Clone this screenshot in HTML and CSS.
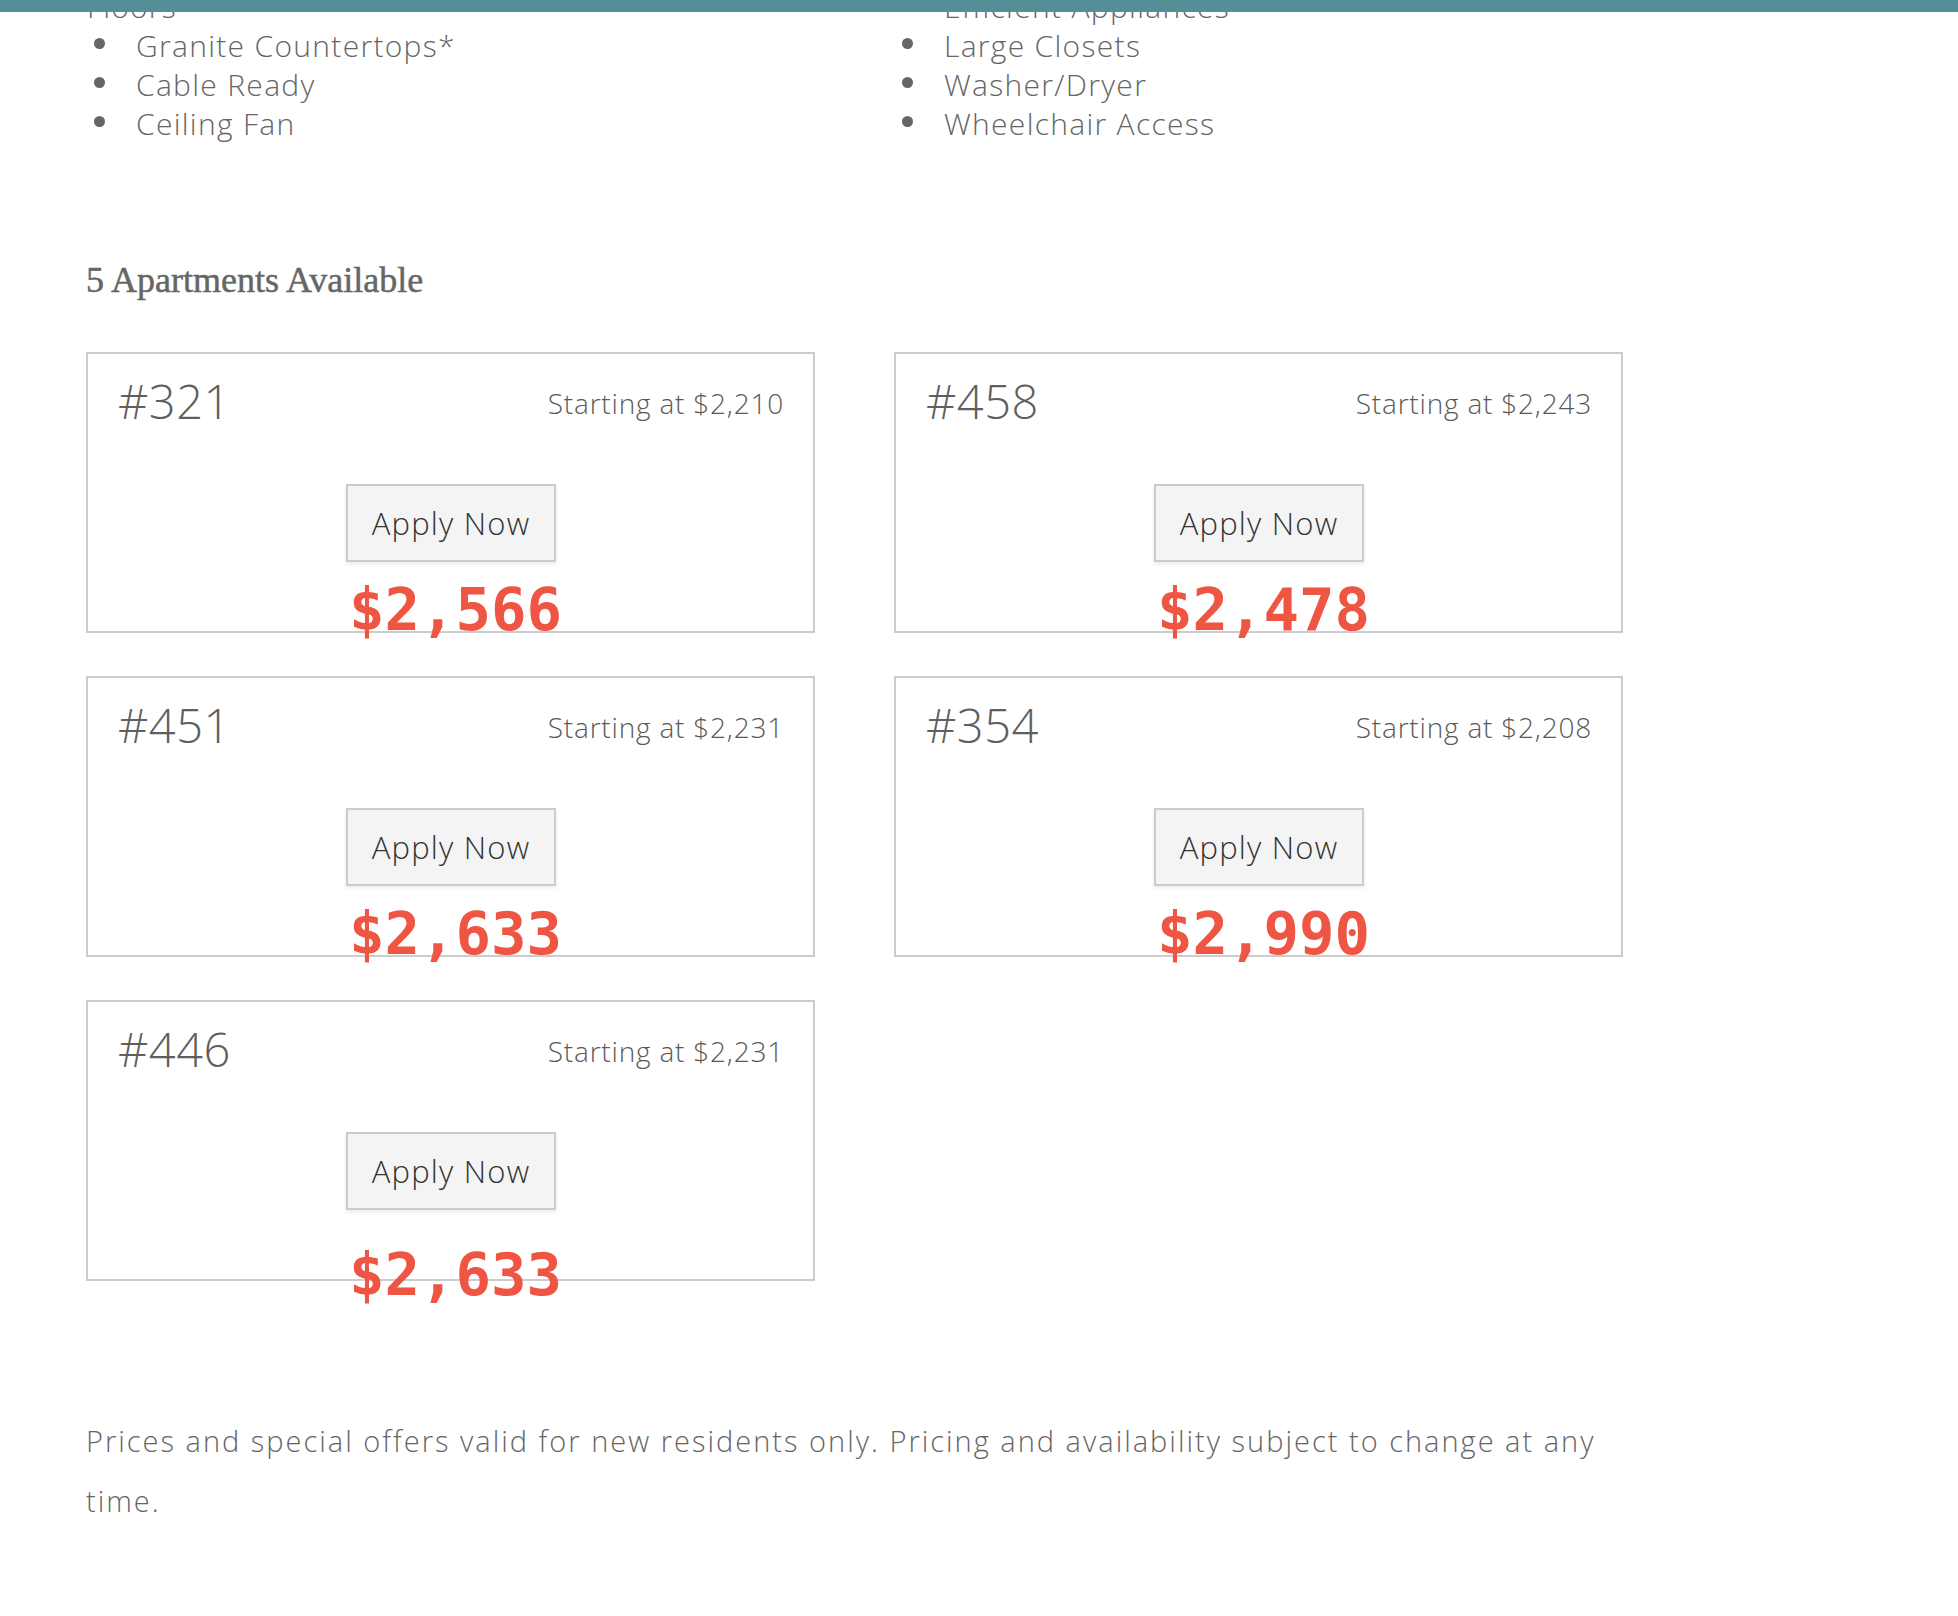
FILE: index.html
```html
<!DOCTYPE html>
<html lang="en">
<head>
<meta charset="utf-8">
<title>Apartments Available</title>
<link rel="stylesheet" href="styles.css">
</head>
<body>
<div class="topbar"></div>
<main class="page">
  <section class="amenities">
    <div class="amen-col">
      <p class="amen-tail">Floors</p>
      <ul class="amen-list">
        <li>Granite Countertops*</li>
        <li>Cable Ready</li>
        <li>Ceiling Fan</li>
      </ul>
    </div>
    <div class="amen-col">
      <ul class="amen-list">
        <li class="no-bullet">Efficient Appliances</li>
        <li>Large Closets</li>
        <li>Washer/Dryer</li>
        <li>Wheelchair Access</li>
      </ul>
    </div>
  </section>

  <h2 class="avail-title">5 Apartments Available</h2>

  <section class="units">
    <article class="unit">
      <div class="unit-head">
        <span class="unit-num">#321</span>
        <span class="unit-start">Starting at $2,210</span>
      </div>
      <button class="apply">Apply Now</button>
      <div class="unit-price">$2,566</div>
    </article>
    <article class="unit">
      <div class="unit-head">
        <span class="unit-num">#458</span>
        <span class="unit-start">Starting at $2,243</span>
      </div>
      <button class="apply">Apply Now</button>
      <div class="unit-price">$2,478</div>
    </article>
    <article class="unit">
      <div class="unit-head">
        <span class="unit-num">#451</span>
        <span class="unit-start">Starting at $2,231</span>
      </div>
      <button class="apply">Apply Now</button>
      <div class="unit-price">$2,633</div>
    </article>
    <article class="unit">
      <div class="unit-head">
        <span class="unit-num">#354</span>
        <span class="unit-start">Starting at $2,208</span>
      </div>
      <button class="apply">Apply Now</button>
      <div class="unit-price">$2,990</div>
    </article>
    <article class="unit">
      <div class="unit-head">
        <span class="unit-num">#446</span>
        <span class="unit-start">Starting at $2,231</span>
      </div>
      <button class="apply">Apply Now</button>
      <div class="unit-price unit-price-low">$2,633</div>
    </article>
  </section>

  <p class="disclaimer">Prices and special offers valid for new residents only. Pricing and availability subject to change at any time.</p>
</main>
</body>
</html>
```
FILE: styles.css
```css
html, body {
  margin: 0;
  padding: 0;
  background: #ffffff;
}

body {
  font-family: "Open Sans", "Noto Sans", "Liberation Sans", sans-serif;
  color: #666666;
  overflow: hidden;
}

.topbar {
  position: fixed;
  top: 0;
  left: 0;
  right: 0;
  height: 12px;
  background: #548f98;
  z-index: 10;
}

.page {
  width: 1540px;
  margin-left: 86px;
  margin-top: -13px;
}

/* amenities */
.amenities {
  display: grid;
  grid-template-columns: 729px 729px;
  column-gap: 79px;
}

.amen-tail {
  margin: 0;
  font-size: 30px;
  font-weight: 300;
  line-height: 39px;
  letter-spacing: 1.2px;
  padding-left: 1px;
}

.amen-list {
  list-style: none;
  margin: 0;
  padding: 0 0 0 50px;
}

.amen-list li {
  position: relative;
  font-size: 30px;
  font-weight: 300;
  line-height: 39px;
  letter-spacing: 1.3px;
  color: #666666;
}

.amen-list li::before {
  content: "";
  position: absolute;
  left: -42px;
  top: 12px;
  width: 11px;
  height: 11px;
  border-radius: 50%;
  background: #666666;
}

.amen-list li.no-bullet::before {
  display: none;
}

/* heading */
.avail-title {
  margin: 117px 0 0 0;
  font-family: "Liberation Serif", "DejaVu Serif", serif;
  font-size: 36px;
  font-weight: normal;
  line-height: 40px;
  color: #666666;
  -webkit-text-stroke: 0.5px #666666;
}

/* unit cards */
.units {
  margin-top: 52px;
  display: grid;
  grid-template-columns: 729px 729px;
  column-gap: 79px;
  row-gap: 43px;
}

.unit {
  box-sizing: border-box;
  height: 281px;
  border: 2px solid #cccccc;
  padding: 25px 29px 0 30px;
  display: flex;
  flex-direction: column;
  align-items: center;
}

.unit > * {
  flex-shrink: 0;
}

.unit-head {
  align-self: stretch;
  display: flex;
  justify-content: space-between;
  align-items: center;
  height: 45px;
}

.unit-num {
  font-size: 47px;
  font-weight: 300;
  line-height: 1;
  color: #5f5f5f;
  letter-spacing: 0.5px;
}

.unit-start {
  font-size: 28px;
  font-weight: 300;
  line-height: 1;
  letter-spacing: 0.8px;
  color: #5a5a5a;
  margin-top: 2px;
}

.apply {
  margin-top: 60px;
  box-sizing: border-box;
  width: 210px;
  height: 78px;
  border: 2px solid #cccccc;
  background: #f4f4f4;
  box-shadow: 0 2px 4px rgba(0, 0, 0, 0.08);
  font-family: "Open Sans", "Noto Sans", sans-serif;
  font-size: 31px;
  font-weight: 300;
  letter-spacing: 1.2px;
  color: #333333;
  padding: 0;
  cursor: pointer;
}

.unit-price {
  margin-top: 19px;
  padding-left: 9px;
  font-family: "DejaVu Sans Mono", "Liberation Mono", monospace;
  font-weight: bold;
  font-size: 59px;
  line-height: 58px;
  color: #ee5543;
}

.unit-price-low {
  margin-top: 36px;
}

.disclaimer {
  margin: 130px 0 0 0;
  font-size: 29px;
  font-weight: 300;
  line-height: 60px;
  letter-spacing: 2px;
  color: #666666;
}
```
